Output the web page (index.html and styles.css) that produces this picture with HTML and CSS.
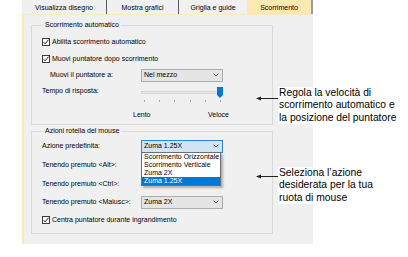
FILE: index.html
```html
<!DOCTYPE html>
<html lang="it">
<head>
<meta charset="utf-8">
<title>Scorrimento</title>
<link rel="stylesheet" href="styles.css">
</head>
<body>
<div class="stage">
  <div class="dialog">
    <div class="tabs">
      <div class="tab t1">Visualizza disegno</div>
      <div class="tab t2">Mostra grafici</div>
      <div class="tab t3">Griglia e guide</div>
      <div class="tab t4 active">Scorrimento</div>
    </div>
    <div class="page">
      <fieldset class="group g1">
        <legend>Scorrimento automatico</legend>
        <div class="row h16">
          <label class="check"><svg class="cb" width="8" height="8" viewBox="0 0 8 8"><rect x="0.5" y="0.5" width="7" height="7" fill="#fff" stroke="#3c3c3c"/><polyline points="1.6,4.1 3.1,5.8 6.6,1.6" fill="none" stroke="#222" stroke-width="1"/></svg>Abilita scorrimento automatico</label>
        </div>
        <div class="row h17">
          <label class="check"><svg class="cb" width="8" height="8" viewBox="0 0 8 8"><rect x="0.5" y="0.5" width="7" height="7" fill="#fff" stroke="#3c3c3c"/><polyline points="1.6,4.1 3.1,5.8 6.6,1.6" fill="none" stroke="#222" stroke-width="1"/></svg>Muovi puntatore dopo scorrimento</label>
        </div>
        <div class="row h16">
          <span class="lbl indent">Muovi il puntatore a:</span>
          <div class="combo"><span>Nel mezzo</span><svg class="chev" width="6" height="4" viewBox="0 0 6 4"><polyline points="0.5,0.5 3,3 5.5,0.5" fill="none" stroke="#666"/></svg></div>
        </div>
        <div class="row slider-row">
          <span class="lbl tall">Tempo di risposta:</span>
          <svg class="slider" width="84" height="21" viewBox="0 0 84 21">
            <rect x="0.5" y="8.5" width="80" height="2" fill="#e7e7e7" stroke="#d6d6d6"/>
            <g fill="#a6a6a6">
              <rect x="3" y="17" width="1" height="2"/>
              <rect x="18" y="17" width="1" height="2"/>
              <rect x="33" y="17" width="1" height="2"/>
              <rect x="49" y="17" width="1" height="2"/>
              <rect x="64" y="17" width="1" height="2"/>
              <rect x="79" y="17" width="1" height="2"/>
            </g>
            <path d="M76 4 H82 V12 L79 15 L76 12 Z" fill="#0078d7"/>
          </svg>
        </div>
        <div class="scale"><span>Lento</span><span>Veloce</span></div>
      </fieldset>
      <fieldset class="group g2">
        <legend>Azioni rotella del mouse</legend>
        <div class="row h18">
          <span class="lbl">Azione predefinita:</span>
          <div class="combo open"><span>Zuma 1.25X</span><svg class="chev" width="6" height="4" viewBox="0 0 6 4"><polyline points="0.5,0.5 3,3 5.5,0.5" fill="none" stroke="#666"/></svg>
            <ul class="popup">
              <li>Scorrimento Orizzontale</li>
              <li>Scorrimento Verticale</li>
              <li>Zuma 2X</li>
              <li class="sel">Zuma 1.25X</li>
            </ul>
          </div>
        </div>
        <div class="row h19"><span class="lbl">Tenendo premuto &lt;Alt&gt;:</span></div>
        <div class="row h19"><span class="lbl">Tenendo premuto &lt;Ctrl&gt;:</span></div>
        <div class="row h18">
          <span class="lbl">Tenendo premuto &lt;Maiusc&gt;:</span>
          <div class="combo"><span>Zuma 2X</span><svg class="chev" width="6" height="4" viewBox="0 0 6 4"><polyline points="0.5,0.5 3,3 5.5,0.5" fill="none" stroke="#666"/></svg></div>
        </div>
        <div class="row h18">
          <label class="check"><svg class="cb" width="8" height="8" viewBox="0 0 8 8"><rect x="0.5" y="0.5" width="7" height="7" fill="#fff" stroke="#3c3c3c"/><polyline points="1.6,4.1 3.1,5.8 6.6,1.6" fill="none" stroke="#222" stroke-width="1"/></svg>Centra puntatore durante ingrandimento</label>
        </div>
      </fieldset>
    </div>
  </div>

  <div class="callout c1">
    <svg class="arrow" width="22" height="5" viewBox="0 0 22 5"><line x1="1" y1="2.5" x2="22" y2="2.5" stroke="#222" stroke-width="1"/><path d="M0 2.5 L5 0.5 L5 4.5 Z" fill="#222"/></svg>
    <p class="note">Regola la velocità di<br>scorrimento automatico e<br>la posizione del puntatore</p>
  </div>
  <div class="callout c2">
    <svg class="arrow" width="22" height="5" viewBox="0 0 22 5"><line x1="1" y1="2.5" x2="22" y2="2.5" stroke="#222" stroke-width="1"/><path d="M0 2.5 L5 0.5 L5 4.5 Z" fill="#222"/></svg>
    <p class="note">Seleziona l’azione<br>desiderata per la tua<br>ruota di mouse</p>
  </div>
</div>
</body>
</html>
```
FILE: styles.css
```css
* { box-sizing: border-box; }
html, body { margin: 0; padding: 0; background: #fff; }
body {
  width: 408px;
  height: 257px;
  overflow: hidden;
  font-family: "Liberation Sans", Arial, sans-serif;
  color: #000;
}
.stage { position: relative; width: 408px; height: 257px; }

.dialog {
  margin-left: 22px;
  width: 291px;
  height: 244px;
  background: #f0f0f0;
  display: flex;
  flex-direction: column;
  font-size: 7px;
}

.tabs { display: flex; height: 14px; }
.tab {
  height: 14px;
  display: flex;
  align-items: center;
  justify-content: center;
  line-height: 8px;
  padding-top: 1px;
}
.t1 { width: 85px; border-right: 1px solid #5a5a5a; }
.t2 { width: 72px; border-right: 1px solid #5a5a5a; }
.t3 { width: 68px; }
.t4 { width: 66px; border-right: 2px solid #9a9a9a; }
.tab.active { background: #fce8b3; }
.t1, .t2 { border-right-style: solid; }

.page {
  flex: 1;
  border-left: 2px solid #fbe9bd;
  border-top: 1px solid #fbe9bd;
  padding: 6px 0 0 7px;
  display: flex;
  flex-direction: column;
}

.group {
  margin: 0;
  min-width: 0;
  width: 242px;
  border: 1px solid #d9d9d9;
  padding: 5px 0 2px 10px;
}
.group legend {
  font-size: 7px;
  line-height: 8px;
  padding: 0 2px;
  margin-left: 1px;
}
.g2 { margin-top: 2px; padding-top: 2px; padding-bottom: 4px; }

.row { display: flex; align-items: center; }
.h16 { height: 16px; }
.h17 { height: 17px; }
.h18 { height: 18px; }
.h19 { height: 19px; }

.check { display: flex; align-items: center; line-height: 8px; }
.cb { display: block; margin-right: 2px; flex: none; }

.lbl { width: 99px; flex: none; line-height: 8px; white-space: nowrap; }
.lbl.indent { padding-left: 8px; }

.combo {
  position: relative;
  width: 82px;
  height: 13px;
  border: 1px solid #adadad;
  background: #e5e5e5;
  display: flex;
  align-items: center;
  justify-content: space-between;
  padding: 0 2px 0 2px;
  line-height: 8px;
}
.combo.open { background: #cfe5f7; border-color: #2a86d6; }
.chev { display: block; margin-right: 1px; }

.popup {
  position: absolute;
  left: -1px;
  top: 100%;
  margin: 0;
  padding: 0;
  list-style: none;
  width: 80px;
  background: #fff;
  border: 1px solid #6e6e6e;
  box-shadow: 2px 2px 2px rgba(0, 0, 0, 0.28);
  z-index: 2;
}
.popup li {
  height: 8px;
  line-height: 8px;
  padding-left: 2px;
  white-space: nowrap;
}
.popup li.sel { background: #0078d7; color: #fff; }

.slider-row { height: 21px; align-items: flex-start; }
.lbl.tall { line-height: 16px; }
.slider { display: block; }

.scale {
  margin-top: 4px;
  margin-left: 91px;
  width: 96px;
  height: 14px;
  display: flex;
  justify-content: space-between;
  align-items: center;
  line-height: 8px;
}

.callout {
  position: absolute;
  display: flex;
  align-items: flex-start;
}
.c1 { left: 256px; top: 87px; }
.c2 { left: 256px; top: 167px; }
.arrow { display: block; flex: none; }
.c1 .arrow { margin-top: 9px; }
.c2 .arrow { margin-top: 7px; }
.note {
  margin: 0;
  background: #fff;
  font-family: "Liberation Sans", Arial, sans-serif;
  font-size: 10.3px;
  line-height: 12.3px;
  color: #000;
  white-space: nowrap;
  padding-left: 1px;
}
```
